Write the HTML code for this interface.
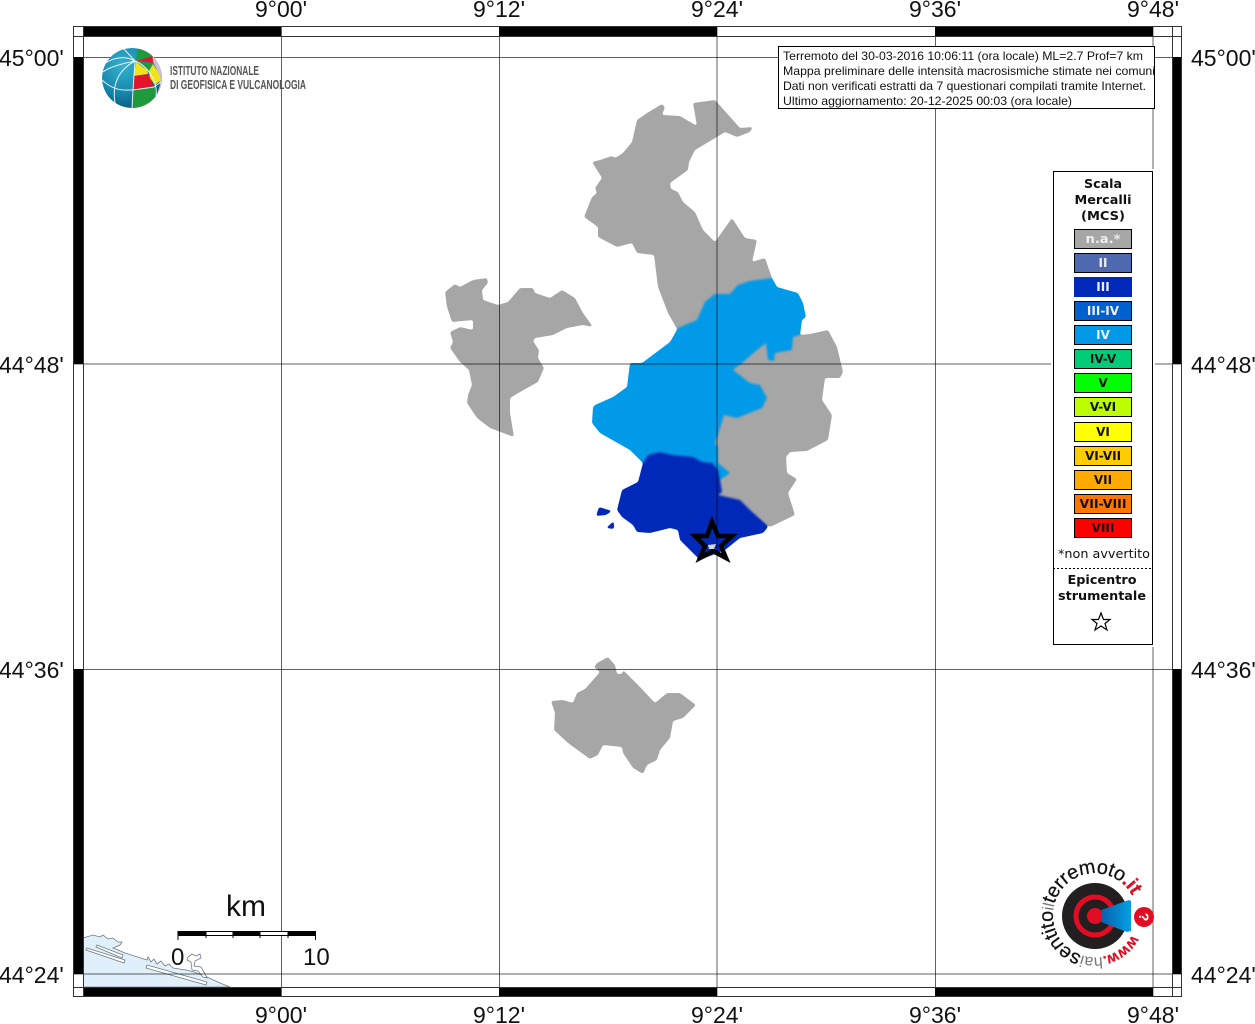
<!DOCTYPE html>
<html lang="it">
<head>
<meta charset="utf-8">
<title>Mappa intensità macrosismiche</title>
<style>
html,body{margin:0;padding:0;background:#fff}
body{width:1255px;height:1024px;overflow:hidden}
svg{display:block}
.lab{font-family:"Liberation Sans",sans-serif;font-size:23px;fill:#111}
.hd{font-family:"Liberation Sans",sans-serif;font-size:12px;fill:#111}
.lg{font-family:"DejaVu Sans",sans-serif;font-size:12px;font-weight:bold;text-anchor:middle;fill:#111}
.w{fill:#eee}
</style>
</head>
<body>
<svg width="1255" height="1024" viewBox="0 0 1255 1024" xmlns="http://www.w3.org/2000/svg">
<defs>
<radialGradient id="teal" cx="35%" cy="30%" r="80%"><stop offset="0" stop-color="#35b3cf"/><stop offset=".6" stop-color="#1482a8"/><stop offset="1" stop-color="#0b4f70"/></radialGradient>
<linearGradient id="cone" x1="0" y1="0" x2="1" y2="0"><stop offset="0" stop-color="#0a5fae"/><stop offset="1" stop-color="#02a0e3"/></linearGradient>
<clipPath id="globe"><circle cx="132" cy="78" r="30"/></clipPath>
<clipPath id="hdclip"><rect x="779" y="47" width="376" height="61"/></clipPath>
<clipPath id="mapclip"><rect x="83" y="36" width="1089" height="951"/></clipPath>
<path id="ring" d="M1132 935 A42 42 0 1 1 1136.8 912.3"/>
<filter id="soft" filterUnits="userSpaceOnUse" x="0" y="0" width="1255" height="1024" color-interpolation-filters="sRGB">
<feGaussianBlur stdDeviation="1.1"/>
<feComponentTransfer><feFuncA type="linear" slope="5" intercept="-2"/></feComponentTransfer>
</filter>
</defs>
<rect width="1255" height="1024" fill="#fff"/>

<!-- corner coastline -->
<g clip-path="url(#mapclip)">
<path d="M83 938L93 935L100 937L103 935L108 939L113 938L118 942L122 942L120 945L113 948L118 950L125 953L147 960L148 957L151 962L154 959L157 964L161 961L165 966L169 964L173 968L186 970L194 972L207 977L220 983L230 987L83 987Z" fill="#dfeffb" stroke="#6f7a80" stroke-width=".8"/>
<path d="M87 948L125 960L124 963L86 950Z M97 945L123 955L122 958L96 947Z M147 965L207 982L206 985L146 968Z" fill="#fff" stroke="#6f7a80" stroke-width=".8"/>
<path d="M188 957L192 954L196 956L200 954L201 958L195 961L194 966L201 967L205 974L207 978L203 977L198 971L192 970L191 962L187 960Z" fill="#fff" stroke="#6f7a80" stroke-width=".8"/>
</g>

<!-- regions -->
<g stroke-linejoin="round" filter="url(#soft)">
<path fill="#a6a6a6" d="M677 329L668 313L658 287L654 255L637 253L632 243L617 247L598 237L598 227L584 217L592 197L597 193L595 188L602 178L592 162L600 160L612 156L615 158L623 153L632 142L637 120L647 113L662 104L665 107L662 115L680 116L697 126L693 103L715 100L740 128L753 127L750 132L737 137L725 132L717 137L695 150L689 162L688 170L670 183L671 189L678 192L683 202L695 212L703 230L715 242L732 218L745 238L757 240L752 262L765 258L772 278L750 281L738 285L730 294L715 294L705 302L697 320Z"/>
<path fill="#a6a6a6" d="M445 292L455 284L460 287L473 280L487 278L488 283L482 290L483 300L498 305L508 302L520 288L533 288L535 293L550 298L562 290L575 298L583 313L593 327L583 325L567 328L553 335L535 338L533 341L539 350L538 358L544 368L538 382L520 392L510 398L510 413L514 437L490 428L477 418L467 403L468 395L472 385L469 370L460 362L450 348L453 342L450 332L460 327L473 330L473 320L452 322L447 307Z"/>
<path fill="#a6a6a6" d="M551 701L563 700L573 703L577 693L585 689L593 680L600 672L594 667L597 663L608 657L615 665L617 674L622 674L623 670L640 687L655 703L667 693L680 693L696 705L683 718L673 721L670 738L660 750L657 760L647 765L643 774L633 768L623 753L622 747L603 745L598 755L590 759L568 743L554 730L555 713Z"/>
<path fill="#009ae8" d="M772 278L777 287L798 293L803 303L806 317L802 320L800 335L793 337L792 350L775 353L774 361L768 360L766 343L757 350L742 363L733 370L750 383L760 385L767 398L762 408L737 418L724 415L718 435L715 443L718 447L718 463L730 473L720 480L700 480L643 463L630 450L600 433L592 423L593 407L595 405L613 397L627 387L630 363L642 363L670 342L678 328L697 320L705 302L715 294L730 294L738 285L750 281Z"/>
<path fill="#a6a6a6" d="M733 370L742 363L757 350L766 343L768 360L774 361L775 353L792 350L793 337L800 335L810 334L828 330L837 347L843 372L840 378L825 378L822 400L832 415L828 440L807 451L790 452L786 457L787 473L797 479L788 493L795 515L770 527L750 510L740 500L718 495L722 492L720 480L730 473L718 463L718 447L715 443L718 435L724 415L737 418L762 408L767 398L760 385L750 383Z"/>
<path fill="#0029b9" d="M643 463L648 455L660 452L672 455L693 457L702 462L712 463L718 470L720 480L722 492L718 495L740 500L750 510L768 527L763 533L740 538L725 550L700 560L690 550L680 540L678 530L670 528L650 533L637 532L633 525L622 517L617 510L622 490L638 482Z"/>
<path fill="#0029b9" d="M596 516L599 507L612 511L606 515Z M606 528L614 521L614 529Z"/>
</g>

<!-- grid -->
<g stroke="#000" stroke-opacity=".62" stroke-width="1" fill="none">
<path d="M281.5 26V997M499.5 26V997M717 26V997M935.5 26V997M1153 26V997"/>
<path d="M73 57.5H1182M73 364H1182M73 669.5H1182M73 974H1182"/>
</g>

<!-- star -->
<path d="M712 522L718 536L732 536L721 546L726 558L713 551L700 558L705 546L695 536L707 536Z" fill="none" stroke="#000" stroke-width="4.5" stroke-linejoin="miter"/>
<path d="M708 545L716 544L714 549L709 549Z" fill="#d8d8d8"/>

<!-- frame bands -->
<g fill="#000">
<rect x="83" y="26" width="198" height="10"/><rect x="499" y="26" width="218" height="10"/><rect x="935" y="26" width="218" height="10"/>
<rect x="83" y="987" width="198" height="10"/><rect x="499" y="987" width="218" height="10"/><rect x="935" y="987" width="218" height="10"/>
<rect x="73" y="57" width="10" height="307"/><rect x="73" y="669" width="10" height="305"/>
<rect x="1172" y="57" width="10" height="307"/><rect x="1172" y="669" width="10" height="305"/>
</g>
<g fill="none" stroke="#333" stroke-width="1">
<rect x="73.5" y="26.5" width="1108" height="970"/>
<path d="M83.5 26V997M1172.5 26V997M73 36.5H1182M73 987.5H1182"/>
</g>

<!-- axis labels -->
<g class="lab">
<text x="255" y="17">9°00'</text><text x="473" y="17">9°12'</text><text x="691" y="17">9°24'</text><text x="909" y="17">9°36'</text><text x="1127" y="17">9°48'</text>
<text x="255" y="1023">9°00'</text><text x="473" y="1023">9°12'</text><text x="691" y="1023">9°24'</text><text x="909" y="1023">9°36'</text><text x="1127" y="1023">9°48'</text>
<text x="-1" y="66">45°00'</text><text x="-1" y="373">44°48'</text><text x="-1" y="678">44°36'</text><text x="-1" y="983">44°24'</text>
<text x="1191" y="66">45°00'</text><text x="1191" y="373">44°48'</text><text x="1191" y="678">44°36'</text><text x="1191" y="983">44°24'</text>
</g>

<!-- INGV logo -->
<g clip-path="url(#globe)">
<circle cx="132" cy="78" r="30" fill="url(#teal)"/>
<path d="M136 60L138 48L152 50L153 57Z" fill="#1e9a3c"/>
<path d="M136 61L153 56L154 63L146 62Z" fill="#e2152c"/>
<path d="M152 50L165 66L165 92L155 100L160 85L157 70L153 62Z" fill="#c9bfd0"/>
<path d="M136 62L147 70L148 74L134 76Z" fill="#f2e21a"/>
<path d="M138 62L153 63L150 70L147 70Z" fill="#1e9a3c"/>
<path d="M149 71L153 64L158 72L161 80L155 85L150 78Z" fill="#f2e21a"/>
<path d="M134 76L148 74L154 86L133 90Z" fill="#e2152c"/>
<path d="M133 90L155 87L156 98L146 110L132 110Z" fill="#1e9a3c"/>
<g fill="none" stroke="#e8f4f8" stroke-width="1">
<path d="M135 61L133 90L132 108M135 61C120 64 108 68 103 72M135 61L123 48M135 61C118 70 112 85 115 103M135 61C125 55 112 58 104 64M102 80C115 92 125 90 133 90L154 87L161 82M135 61C148 66 158 82 156 96"/>
</g>
</g>
<text x="170" y="75" font-family="'Liberation Sans',sans-serif" font-weight="bold" font-size="12.5" fill="#555" textLength="89" lengthAdjust="spacingAndGlyphs">ISTITUTO NAZIONALE</text>
<text x="170" y="89" font-family="'Liberation Sans',sans-serif" font-weight="bold" font-size="12.5" fill="#555" textLength="136" lengthAdjust="spacingAndGlyphs">DI GEOFISICA E VULCANOLOGIA</text>

<!-- header box -->
<rect x="778.5" y="46.5" width="376" height="62" fill="#fff" stroke="#000" stroke-width="1"/>
<g class="hd" clip-path="url(#hdclip)">
<text x="783" y="60" textLength="360" lengthAdjust="spacingAndGlyphs">Terremoto del 30-03-2016 10:06:11 (ora locale) ML=2.7 Prof=7 km</text>
<text x="783" y="75" textLength="372" lengthAdjust="spacingAndGlyphs">Mappa preliminare delle intensità macrosismiche stimate nei comuni</text>
<text x="783" y="90" textLength="363" lengthAdjust="spacingAndGlyphs">Dati non verificati estratti da 7 questionari compilati tramite Internet.</text>
<text x="783" y="105" textLength="289" lengthAdjust="spacingAndGlyphs">Ultimo aggiornamento: 20-12-2025 00:03 (ora locale)</text>
</g>

<!-- legend -->
<rect x="1051" y="169" width="104" height="478" fill="#fff"/>
<rect x="1053.5" y="171.5" width="99" height="473" fill="#fff" stroke="#000" stroke-width="1"/>
<g class="lg">
<text x="1103" y="188" textLength="38" lengthAdjust="spacingAndGlyphs">Scala</text>
<text x="1103" y="204" textLength="57" lengthAdjust="spacingAndGlyphs">Mercalli</text>
<text x="1103" y="220" textLength="44" lengthAdjust="spacingAndGlyphs">(MCS)</text>
</g>
<g stroke="#000" stroke-width="1">
<rect x="1074.5" y="229.5" width="57" height="19" fill="#a6a6a6"/>
<rect x="1074.5" y="253.5" width="57" height="19" fill="#4f69b0"/>
<rect x="1074" y="277" width="58" height="20" fill="#0029b9" stroke="none"/>
<rect x="1074.5" y="301.5" width="57" height="19" fill="#0060d0"/>
<rect x="1074.5" y="325.5" width="57" height="19" fill="#0099e8"/>
<rect x="1074.5" y="349.5" width="57" height="19" fill="#00cc77"/>
<rect x="1074.5" y="373.5" width="57" height="19" fill="#00ff00"/>
<rect x="1074.5" y="397.5" width="57" height="19" fill="#bbff00"/>
<rect x="1074.5" y="422.5" width="57" height="19" fill="#ffff00"/>
<rect x="1074.5" y="446.5" width="57" height="19" fill="#ffcc00"/>
<rect x="1074.5" y="470.5" width="57" height="19" fill="#ffaa00"/>
<rect x="1074.5" y="494.5" width="57" height="19" fill="#ff7700"/>
<rect x="1074.5" y="518.5" width="57" height="19" fill="#ff0000"/>
</g>
<g class="lg">
<text class="w" x="1103" y="243" textLength="35" lengthAdjust="spacingAndGlyphs">n.a.*</text>
<text class="w" x="1103" y="267">II</text>
<text class="w" x="1103" y="291">III</text>
<text class="w" x="1103" y="315">III-IV</text>
<text class="w" x="1103" y="339">IV</text>
<text x="1103" y="363">IV-V</text>
<text x="1103" y="387">V</text>
<text x="1103" y="411">V-VI</text>
<text x="1103" y="436">VI</text>
<text x="1103" y="460">VI-VII</text>
<text x="1103" y="484">VII</text>
<text x="1103" y="508" textLength="47" lengthAdjust="spacingAndGlyphs">VII-VIII</text>
<text x="1103" y="532">VIII</text>
<text x="1104" y="558" style="font-weight:normal" textLength="92" lengthAdjust="spacingAndGlyphs">*non avvertito</text>
<text x="1102" y="584" textLength="69" lengthAdjust="spacingAndGlyphs">Epicentro</text>
<text x="1102" y="600" textLength="88" lengthAdjust="spacingAndGlyphs">strumentale</text>
</g>
<path d="M1053 568.5H1152" stroke="#000" stroke-width="1" stroke-dasharray="2 2"/>
<path d="M1101 613L1103.5 619.5L1110 619.5L1105 623.5L1107 630L1101 626L1095 630L1097 623.5L1092 619.5L1098.5 619.5Z" fill="#fff" stroke="#000" stroke-width="1.2"/>

<!-- scale -->
<text x="226" y="916" font-family="'Liberation Sans',sans-serif" font-size="30" fill="#111">km</text>
<rect x="178" y="931" width="138" height="5" fill="#000"/>
<rect x="206" y="932" width="27" height="3" fill="#fff"/><rect x="260" y="932" width="28" height="3" fill="#fff"/>
<path d="M178 931V940M315.5 931V940M206 931V938M233 931V938M260 931V938M288 931V938" stroke="#000" stroke-width="1" fill="none"/>
<text x="171" y="965" font-family="'Liberation Sans',sans-serif" font-size="24" fill="#111">0</text>
<text x="303" y="965" font-family="'Liberation Sans',sans-serif" font-size="24" fill="#111">10</text>

<!-- hai sentito logo -->
<circle cx="1095" cy="916" r="33" fill="#231f20"/>
<circle cx="1095" cy="916" r="19" fill="none" stroke="#e30d23" stroke-width="5"/>
<circle cx="1095" cy="916" r="8" fill="#e30d23"/>
<path d="M1101 910L1129 900L1131 901L1131 931L1127 932L1101 922Z" fill="url(#cone)"/>
<circle cx="1144" cy="917" r="10" fill="#e30d23"/>
<text x="1144" y="917" transform="rotate(90 1144 917)" dy="5" text-anchor="middle" font-family="'Liberation Sans',sans-serif" font-weight="bold" font-size="14" fill="#fff">?</text>
<text font-family="'Liberation Sans',sans-serif" font-size="19.8" fill="#111" stroke="#111" stroke-width=".25" letter-spacing="-.2">
<textPath href="#ring"><tspan fill="#e30d23" stroke="#e30d23" font-weight="bold" font-size="15">www.</tspan><tspan fill="#777" stroke="none" font-size="16">hai</tspan><tspan>sentito</tspan><tspan fill="#777" stroke="none" font-size="16">il</tspan><tspan>terremoto</tspan><tspan fill="#e30d23" stroke="#e30d23" font-weight="bold">.it</tspan></textPath>
</text>
</svg>
</body>
</html>
